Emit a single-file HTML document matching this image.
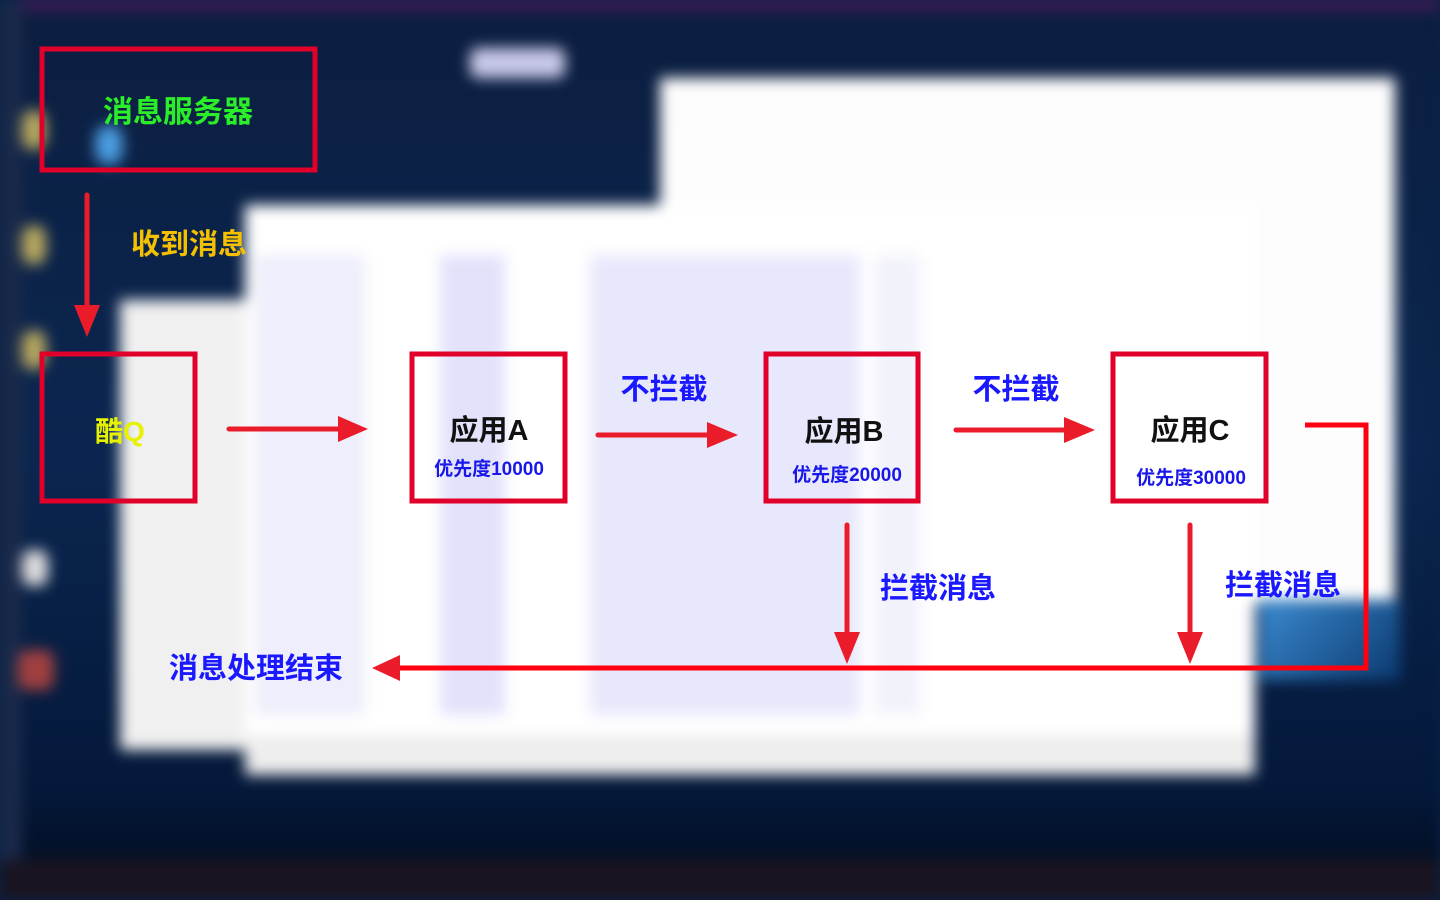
<!DOCTYPE html>
<html><head><meta charset="utf-8"><style>
html,body{margin:0;padding:0;width:1440px;height:900px;overflow:hidden;background:#0a2246}
.bg{position:absolute;inset:0;filter:blur(7px)}
.bg div{position:absolute}
svg{position:absolute;left:0;top:0}
text{font-family:"Liberation Sans","Noto Sans CJK SC",sans-serif;font-weight:bold}
</style></head><body>
<div class="bg">
 <div style="left:0;top:0;width:1440px;height:900px;background:linear-gradient(180deg,#0c1e40 0%,#0a2650 50%,#04183a 88%,#020a18 100%)"></div>
 <div style="left:0;top:0;width:1440px;height:10px;background:#4a1a5a"></div>
 <div style="left:0;top:0;width:22px;height:900px;background:#1a2a4a"></div>
 <div style="left:22px;top:110px;width:24px;height:40px;background:#b8a860;border-radius:12px"></div>
 <div style="left:22px;top:225px;width:24px;height:40px;background:#b8a860;border-radius:12px"></div>
 <div style="left:22px;top:330px;width:24px;height:40px;background:#b8a860;border-radius:12px"></div>
 <div style="left:22px;top:550px;width:26px;height:36px;background:#ddd;border-radius:10px"></div>
 <div style="left:18px;top:650px;width:36px;height:40px;background:#a04040;border-radius:10px"></div>
 <div style="left:95px;top:125px;width:28px;height:40px;background:#4a9ce0;border-radius:14px"></div>
 <div style="left:470px;top:48px;width:95px;height:30px;background:#c8c8e8;border-radius:8px"></div>
 <div style="left:660px;top:78px;width:735px;height:525px;background:#fdfdfd"></div>
 <div style="left:1260px;top:600px;width:140px;height:80px;background:linear-gradient(135deg,#3a8ad0,#0c3a70)"></div>
 <div style="left:120px;top:300px;width:130px;height:450px;background:#f0f0f0"></div>
 <div style="left:245px;top:205px;width:1010px;height:570px;background:#fff"></div>
 <div style="left:245px;top:735px;width:1010px;height:40px;background:#eee"></div>
 <div style="left:255px;top:255px;width:110px;height:460px;background:#eeeefc"></div>
 <div style="left:440px;top:255px;width:65px;height:460px;background:#e2e2fb"></div>
 <div style="left:590px;top:255px;width:270px;height:460px;background:#e8e8fc"></div>
 <div style="left:875px;top:255px;width:45px;height:460px;background:#f2f2fc"></div>
 <div style="left:0;top:860px;width:1440px;height:40px;background:#1a1420"></div>
</div>
<svg width="1440" height="900" viewBox="0 0 1440 900">
 <g fill="none" stroke="#e0002a" stroke-width="5">
  <rect x="42" y="49" width="273" height="121"/>
  <rect x="42" y="354" width="153" height="147"/>
  <rect x="412" y="354" width="153" height="147"/>
  <rect x="766" y="354" width="152" height="147"/>
  <rect x="1113" y="354" width="153" height="147"/>
 </g>
 <g stroke="#ea1c2a" stroke-width="5" stroke-linecap="round" fill="none">
  <line x1="87" y1="195" x2="87" y2="315"/>
  <line x1="229" y1="429" x2="345" y2="429"/>
  <line x1="598" y1="435" x2="715" y2="435"/>
  <line x1="956" y1="430" x2="1072" y2="430"/>
  <line x1="847" y1="525" x2="847" y2="640"/>
  <line x1="1190" y1="525" x2="1190" y2="640"/>
 </g>
 <polyline points="1305,425 1366,425 1366,668 395,668" fill="none" stroke="#ff0010" stroke-width="5"/>
 <g fill="#ea1c2a">
  <polygon points="74,305 100,305 87,337"/>
  <polygon points="338,416 368,429 338,442"/>
  <polygon points="707,422 738,435 707,448"/>
  <polygon points="1064,417 1095,430 1064,443"/>
  <polygon points="834,632 860,632 847,664"/>
  <polygon points="1177,632 1203,632 1190,664"/>
  <polygon points="372,668 400,655 400,681"/>
 </g>
 <text x="178" y="122" font-size="30" fill="#2aee2a" text-anchor="middle">消息服务器</text>
 <text x="131" y="254" font-size="29" fill="#f5c000">收到消息</text>
 <text x="95" y="441" font-size="28" fill="#e6f200">酷Q</text>
 <text x="489" y="440" font-size="29" fill="#111" text-anchor="middle" font-weight="normal">应用A</text>
 <text x="489" y="475" font-size="19" fill="#1a18e8" text-anchor="middle">优先度10000</text>
 <text x="664" y="399" font-size="29" fill="#1a18ff" text-anchor="middle">不拦截</text>
 <text x="844" y="441" font-size="29" fill="#111" text-anchor="middle" font-weight="normal">应用B</text>
 <text x="847" y="481" font-size="19" fill="#1a18e8" text-anchor="middle">优先度20000</text>
 <text x="1016" y="399" font-size="29" fill="#1a18ff" text-anchor="middle">不拦截</text>
 <text x="1190" y="440" font-size="29" fill="#111" text-anchor="middle" font-weight="normal">应用C</text>
 <text x="1191" y="484" font-size="19" fill="#1a18e8" text-anchor="middle">优先度30000</text>
 <text x="938" y="598" font-size="29" fill="#1a18ff" text-anchor="middle">拦截消息</text>
 <text x="1283" y="595" font-size="29" fill="#1a18ff" text-anchor="middle">拦截消息</text>
 <text x="256" y="678" font-size="29" fill="#1a18ff" text-anchor="middle">消息处理结束</text>
</svg>
</body></html>
